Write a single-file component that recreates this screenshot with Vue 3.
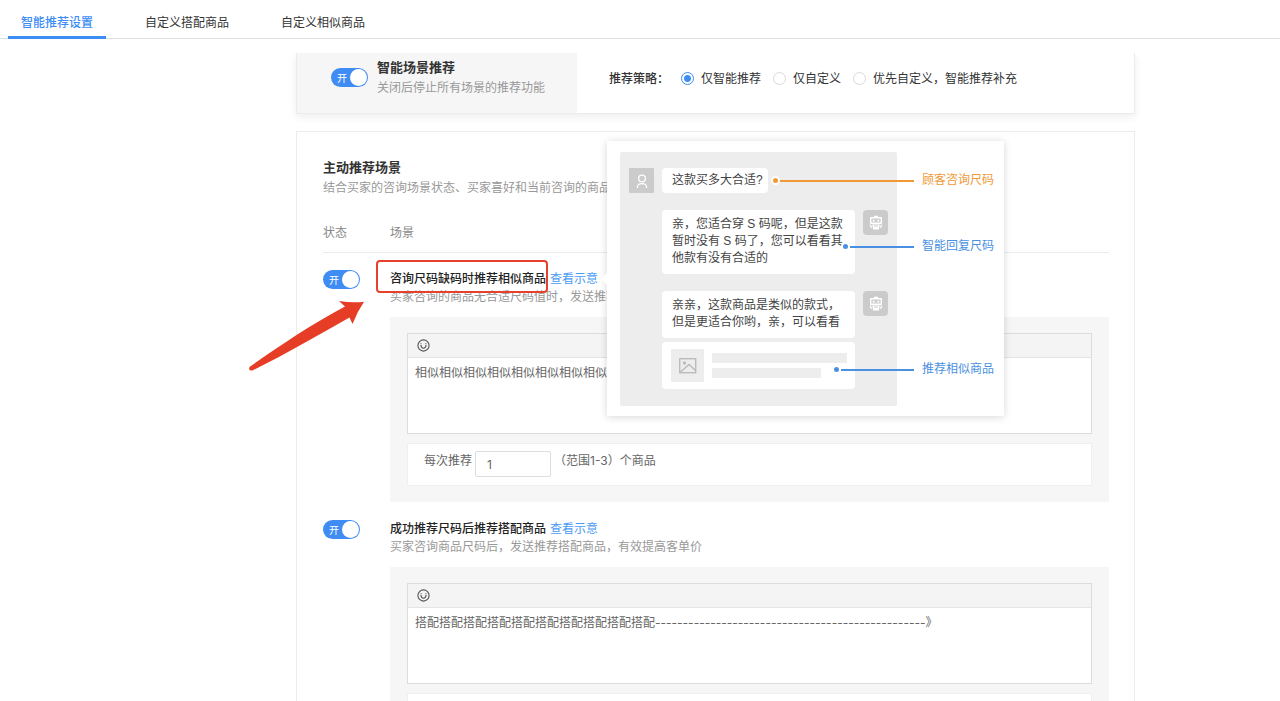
<script setup>
import { ref } from 'vue'

const tabs = ['智能推荐设置', '自定义搭配商品', '自定义相似商品']
const activeTab = ref(0)

const strategies = ['仅智能推荐', '仅自定义', '优先自定义，智能推荐补充']
const strategy = ref(0)
const enabled = ref(true)

const scenes = ref([
  {
    on: true,
    title: '咨询尺码缺码时推荐相似商品',
    desc: '买家咨询的商品无合适尺码值时，发送推荐相似商品',
    text: '相似'.repeat(20),
    count: '1',
    marked: true,
  },
  {
    on: true,
    title: '成功推荐尺码后推荐搭配商品',
    desc: '买家咨询商品尺码后，发送推荐搭配商品，有效提高客单价',
    text: '搭配'.repeat(10) + '-'.repeat(49) + '》',
    count: '1',
    marked: false,
  },
])
</script>

<template>
  <div class="page">
    <nav class="tabs">
      <button
        v-for="(tab, i) in tabs"
        :key="tab"
        type="button"
        class="tab"
        :class="{ active: activeTab === i }"
        @click="activeTab = i"
      >{{ tab }}</button>
    </nav>

    <main class="content">
      <section class="card summary">
        <div class="summary-main">
          <label class="switch">
            <input v-model="enabled" type="checkbox" aria-label="智能场景推荐" />
            <span class="switch-text">开</span>
            <span class="knob"></span>
          </label>
          <div>
            <h2 class="heading">智能场景推荐</h2>
            <p class="hint">关闭后停止所有场景的推荐功能</p>
          </div>
        </div>
        <div class="strategy" role="radiogroup" aria-labelledby="strategy-label">
          <span id="strategy-label" class="strategy-label">推荐策略：</span>
          <label v-for="(s, i) in strategies" :key="s" class="radio">
            <input v-model="strategy" type="radio" name="strategy" :value="i" />
            <span>{{ s }}</span>
          </label>
        </div>
      </section>

      <section class="card scenes">
        <h2 class="heading">主动推荐场景</h2>
        <p class="hint">结合买家的咨询场景状态、买家喜好和当前咨询的商品信息</p>

        <table class="table">
          <thead>
            <tr>
              <th class="col-status">状态</th>
              <th>场景</th>
            </tr>
          </thead>
          <tbody>
            <tr v-for="(scene, i) in scenes" :key="scene.title">
              <td>
                <label class="switch">
                  <input v-model="scene.on" type="checkbox" :aria-label="scene.title" />
                  <span class="switch-text">开</span>
                  <span class="knob"></span>
                </label>
              </td>
              <td>
                <div class="scene-head">
                  <span class="scene-title">{{ scene.title }}
                    <span v-if="scene.marked" class="mark-box"></span>
                    <svg v-if="scene.marked" class="mark-arrow" width="118" height="72" viewBox="0 0 118 72">
                      <path d="M1.5 67 C30 47 62 25 97 6.500 Q93 3 91 1 Q104 3 116 1.700 Q109 12 104.500 24 L101.500 17.500 C70 35 38 54 4.500 70.500 Q0 71 1.500 67Z" fill="#e63e26" />
                    </svg>
                  </span>
                  <span class="example">
                    <a href="#">查看示意</a>
                    <div v-if="scene.marked" class="popover">
                      <div class="chat">
                        <div class="msg">
                          <span class="avatar guest">
                            <svg width="25" height="25" viewBox="0 0 25 25" fill="none" stroke="#fff" stroke-width="1.300">
                              <circle cx="13" cy="10.500" r="3.400" />
                              <path d="M8.500 20 V18.500 Q9 15.700 13 15.700 Q17 15.700 17.500 18.500 V20" />
                            </svg>
                          </span>
                          <div class="bubble short">这款买多大合适?</div>
                          <div class="callout ask"><i></i><b></b><span>顾客咨询尺码</span></div>
                        </div>
                        <div class="msg">
                          <div class="bubble">亲，您适合穿 S 码呢，但是这款<br />暂时没有 S 码了，您可以看看其<br />他款有没有合适的</div>
                          <span class="avatar">
                            <svg width="25" height="25" viewBox="0 0 25 25">
                              <path fill="#fff" fill-rule="evenodd" d="M11 5.700h4v1.300h3.200q.8 0 .8 .8v5.400q0 .8-.8 .8H7.800q-.8 0-.8-.8V7.800q0-.8 .8-.8H11zM8.400 8.500v4h9.200v-4zM9.700 9.700h2v1.800h-2zM14.300 9.700h2v1.800h-2zM6.600 14.800h1.600l1 3.700q-2.300-.5-2.600-3.700zM19.400 14.800h-1.600l-1 3.700q2.300-.5 2.600-3.700zM9.300 14.600h7.400l-.8 4.800h-5.800zM11 15.600v1h4v-1z" />
                            </svg>
                          </span>
                          <div class="callout reply"><i></i><b></b><span>智能回复尺码</span></div>
                        </div>
                        <div class="msg">
                          <div class="stack">
                            <div class="bubble">亲亲，这款商品是类似的款式，<br />但是更适合你哟，亲，可以看看</div>
                            <div class="bubble product">
                              <svg class="thumb" width="33" height="33" viewBox="0 0 33 33">
                                <rect width="33" height="33" rx="1" fill="#ededed" />
                                <g fill="none" stroke="#bbb" stroke-width="1.400">
                                  <rect x="8.700" y="9.700" width="16" height="14" />
                                  <path d="M9.500 23 L18 15.500 L24.500 21.500" />
                                </g>
                                <circle cx="13.500" cy="14" r="1.700" fill="#bbb" />
                              </svg>
                              <span class="lines"><i></i><i></i></span>
                            </div>
                          </div>
                          <span class="avatar">
                            <svg width="25" height="25" viewBox="0 0 25 25">
                              <path fill="#fff" fill-rule="evenodd" d="M11 5.700h4v1.300h3.200q.8 0 .8 .8v5.400q0 .8-.8 .8H7.800q-.8 0-.8-.8V7.800q0-.8 .8-.8H11zM8.400 8.500v4h9.200v-4zM9.700 9.700h2v1.800h-2zM14.300 9.700h2v1.800h-2zM6.600 14.800h1.600l1 3.700q-2.300-.5-2.600-3.700zM19.400 14.800h-1.600l-1 3.700q2.300-.5 2.600-3.700zM9.300 14.600h7.400l-.8 4.800h-5.800zM11 15.600v1h4v-1z" />
                            </svg>
                          </span>
                          <div class="callout similar"><i></i><b></b><span>推荐相似商品</span></div>
                        </div>
                      </div>
                    </div>
                  </span>
                </div>
                <p class="scene-desc">{{ scene.desc }}</p>

                <div class="panel">
                  <div class="editor">
                    <div class="toolbar">
                      <button type="button" class="emoji" aria-label="插入表情">
                        <svg width="13" height="13" viewBox="0 0 13 13" fill="none" stroke="#555" stroke-width="1.100">
                          <circle cx="6.500" cy="6.500" r="5.600" />
                          <path d="M3.900 6 Q4.200 9.300 6.500 9.300 Q8.800 9.300 9.100 6" />
                          <path d="M4.100 4.300v.9M8.900 4.300v.9" />
                        </svg>
                      </button>
                    </div>
                    <textarea v-model="scene.text" :aria-label="scene.title + '话术'"></textarea>
                  </div>
                  <div class="count">
                    <label :for="'count-' + i">每次推荐</label>
                    <input :id="'count-' + i" v-model="scene.count" type="text" />
                    <span>（范围1-3）个商品</span>
                  </div>
                </div>
              </td>
            </tr>
          </tbody>
        </table>
      </section>
    </main>
  </div>
</template>

<style>
body {
  margin: 0;
  background: #fff;
}
</style>

<style scoped>
* {
  box-sizing: border-box;
}

.page {
  display: flex;
  flex-direction: column;
  height: 100vh;
  color: #333;
  font: 12px/18px Inter, "Noto Sans CJK SC", sans-serif;
}

button,
input,
textarea {
  font: inherit;
  color: inherit;
}

h2,
p {
  margin: 0;
}

a {
  color: #4a9bf5;
  text-decoration: none;
}

.tabs {
  display: flex;
  flex: none;
  gap: 26px;
  height: 39px;
  padding: 0 8px;
  border-bottom: 1px solid #e0e0e0;
}

.tab {
  height: 39px;
  padding: 9px 13px 0;
  border: 0;
  border-bottom: 3px solid transparent;
  background: none;
  cursor: pointer;
}

.tab.active {
  border-bottom-color: #3d8df5;
  color: #3d8df5;
  font-weight: 500;
}

.content {
  flex: 1;
  min-height: 0;
  margin-top: 14px;
  padding: 0 145px 0 296px;
  overflow: hidden auto;
  scrollbar-width: none;
}

.card {
  border: 1px solid #ececec;
  background: #fff;
}

.summary {
  display: flex;
  height: 61px;
  border-top: 0;
  box-shadow: 0 3px 8px rgba(0, 0, 0, 0.07);
}

.summary-main {
  display: flex;
  align-items: flex-start;
  gap: 9px;
  flex: 0 0 280px;
  padding: 3px 0 0 34px;
  background: #f6f6f6;
}

.summary-main .switch {
  margin-top: 12px;
}

.heading {
  font-size: 13px;
  line-height: 22px;
  font-weight: 700;
}

.hint {
  line-height: 20px;
  color: #999;
}

.strategy {
  display: flex;
  align-items: center;
  gap: 12px;
  padding: 0 0 9px 32px;
}

.strategy-label {
  font-weight: 500;
}

.radio {
  display: flex;
  align-items: center;
  gap: 7px;
}

.radio input {
  appearance: none;
  width: 13px;
  height: 13px;
  margin: 0;
  border: 1px solid #d9d9d9;
  border-radius: 50%;
  background: #fff;
}

.radio input:checked {
  border-color: #3d8df5;
  background: radial-gradient(circle, #3d8df5 3px, #fff 4px);
}

.switch {
  display: flex;
  align-items: center;
  justify-content: space-between;
  width: 37px;
  height: 19px;
  padding: 0 1px 0 6px;
  border-radius: 10px;
  background: #3f8cf4;
  cursor: pointer;
}

.switch input {
  appearance: none;
  width: 0;
  height: 0;
  margin: 0;
}

.switch-text {
  flex: 1;
  color: #fff;
  font-size: 10px;
}

.knob {
  width: 17px;
  height: 17px;
  border-radius: 50%;
  background: #fff;
}

.scenes {
  margin-top: 17px;
  padding: 24px 25px 16px 26px;
}

.table {
  width: 100%;
  margin-top: 19px;
  border-collapse: separate;
  border-spacing: 0;
  table-layout: fixed;
}

th {
  padding: 11px 0 14px;
  border-bottom: 1px solid #ececec;
  font-weight: 400;
  line-height: 10px;
  text-align: left;
  color: #888;
}

.col-status {
  width: 67px;
}

td {
  padding: 17px 0 1px;
  vertical-align: top;
}

.scene-head {
  display: flex;
  gap: 4px;
}

.scene-title {
  position: relative;
  font-weight: 500;
  color: #222;
  white-space: nowrap;
}

.mark-box {
  position: absolute;
  z-index: 2;
  left: -14px;
  top: -10px;
  width: 172px;
  height: 33px;
  border: 2px solid #e4422d;
  border-radius: 4px;
}

.mark-arrow {
  position: absolute;
  z-index: 2;
  left: -142px;
  top: 30px;
}

.example {
  position: relative;
}

.scene-desc {
  overflow: hidden;
  color: #999;
  white-space: nowrap;
}

.panel {
  margin-top: 11px;
  padding: 16px 17px;
  background: #f6f6f6;
}

.editor {
  border: 1px solid #dcdcdc;
  background: #fff;
}

.toolbar {
  height: 24px;
  padding: 5px 9px;
  border-bottom: 1px solid #e4e4e4;
  background: #f4f4f4;
}

.emoji {
  display: block;
  padding: 0;
  border: 0;
  background: none;
}

.emoji svg {
  display: block;
}

textarea {
  display: block;
  width: 100%;
  height: 75px;
  padding: 6px 7px;
  border: 0;
  outline: 0;
  background: none;
  color: #666;
  resize: none;
}

.count {
  display: flex;
  gap: 3px;
  height: 43px;
  margin-top: 9px;
  padding: 7px 16px;
  border: 1px solid #efefef;
  background: #fff;
  color: #666;
}

.count label,
.count span {
  padding-top: 1px;
}

.count input {
  width: 76px;
  height: 26px;
  padding: 0 11px;
  border: 1px solid #dedede;
  border-radius: 2px;
  background: #fff;
}

.popover {
  position: absolute;
  z-index: 5;
  left: 57px;
  top: -129px;
  width: 397px;
  padding: 11px 13px 10px;
  background: #fff;
  box-shadow: 0 1px 8px rgba(0, 0, 0, 0.16);
  color: #444;
  font-family: "Liberation Sans", "Noto Sans CJK SC", sans-serif;
  line-height: 17px;
}

.popover::before {
  content: "";
  position: absolute;
  left: -4px;
  top: 134px;
  width: 8px;
  height: 8px;
  background: #fff;
  transform: rotate(45deg);
}

.chat {
  display: grid;
  gap: 17px;
  width: 277px;
  padding: 16px 9px 17px;
  border-radius: 2px;
  background: #ededed;
}

.msg {
  position: relative;
  display: grid;
  grid-template-columns: 25px 1fr 25px;
  column-gap: 8px;
  align-items: start;
}

.avatar {
  grid-column: 3;
  height: 25px;
  border-radius: 4px;
  background: #cbcbcb;
}

.avatar.guest {
  grid-column: 1;
  border-radius: 1px;
}

.avatar svg {
  display: block;
}

.bubble {
  padding: 6px 10px 7px;
  border-radius: 4px;
  background: #fff;
  white-space: nowrap;
}

.msg > .bubble {
  grid-column: 2;
}

.bubble.short {
  justify-self: start;
  padding: 4px 5px 4px 10px;
}

.stack {
  grid-column: 2;
  display: grid;
  gap: 4px;
}

.bubble.product {
  display: flex;
  gap: 8px;
  padding: 7px 8px 7px 9px;
}

.lines {
  display: grid;
  flex: 1;
  gap: 5px;
  align-content: center;
}

.lines i {
  height: 10px;
  border-radius: 1px;
  background: #ededed;
}

.lines i:last-child {
  width: 109px;
}

.callout {
  position: absolute;
  right: -106px;
  display: flex;
  align-items: center;
  color: #4a90e2;
}

.callout i {
  width: 9px;
  height: 9px;
  border: 2px solid #fff;
  border-radius: 50%;
  background: currentColor;
}

.callout b {
  flex: 1;
  height: 2px;
  margin-right: 8px;
  background: currentColor;
}

.callout.ask {
  top: 4px;
  width: 223px;
  color: #f09a37;
}

.callout.reply {
  top: 28px;
  width: 153px;
}

.callout.similar {
  top: 70px;
  width: 162px;
}
</style>
